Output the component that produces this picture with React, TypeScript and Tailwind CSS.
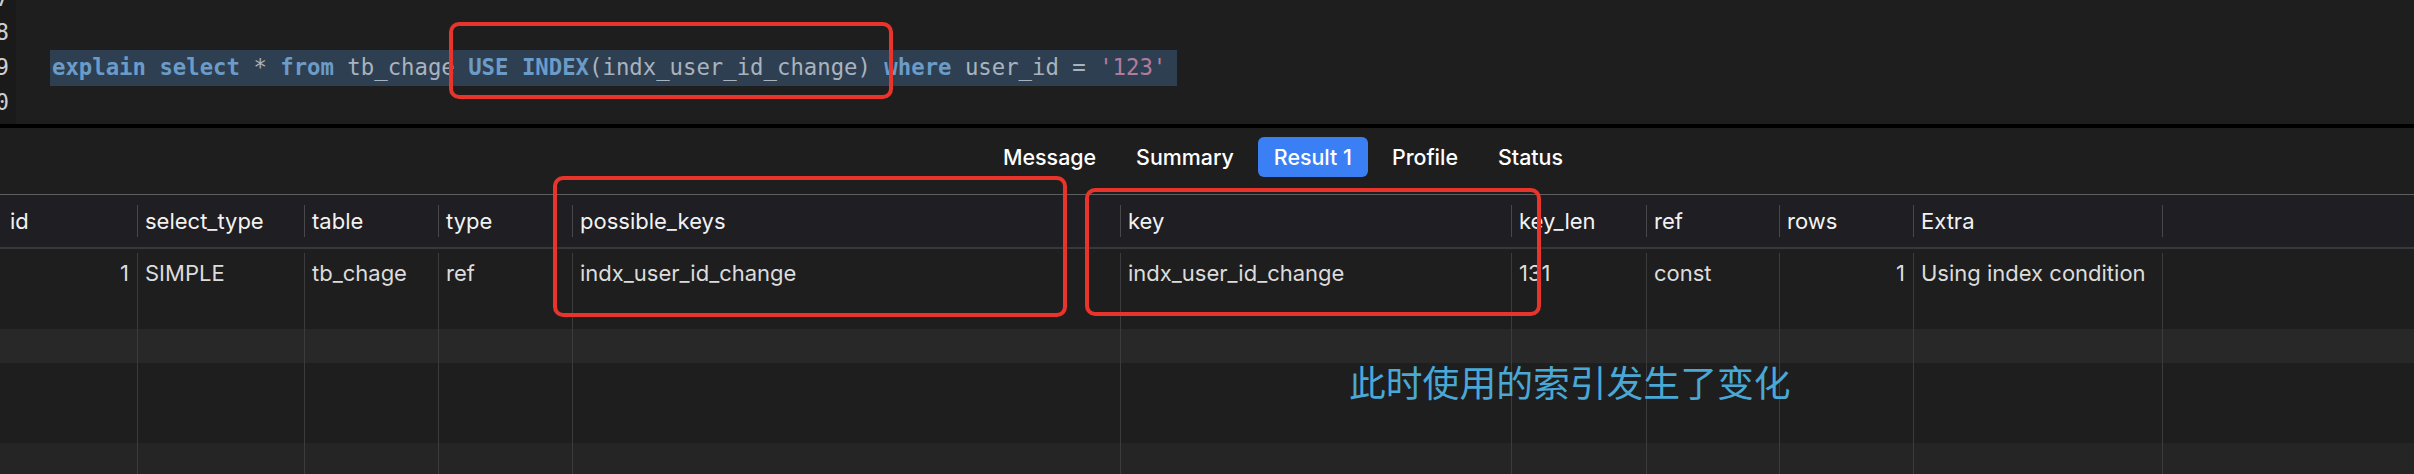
import React from 'react';

type Token = { text: string; kind?: 'kw' | 'str' };

const codeLine: Token[] = [
  { text: 'explain', kind: 'kw' },
  { text: ' ' },
  { text: 'select', kind: 'kw' },
  { text: ' * ' },
  { text: 'from', kind: 'kw' },
  { text: ' tb_chage ' },
  { text: 'USE', kind: 'kw' },
  { text: ' ' },
  { text: 'INDEX', kind: 'kw' },
  { text: '(indx_user_id_change) ' },
  { text: 'where', kind: 'kw' },
  { text: ' user_id = ' },
  { text: "'123'", kind: 'str' },
];

interface Column {
  name: string;
  value: string;
  right?: boolean;
}

const columns: Column[] = [
  { name: 'id', value: '1', right: true },
  { name: 'select_type', value: 'SIMPLE' },
  { name: 'table', value: 'tb_chage' },
  { name: 'type', value: 'ref' },
  { name: 'possible_keys', value: 'indx_user_id_change' },
  { name: 'key', value: 'indx_user_id_change' },
  { name: 'key_len', value: '131' },
  { name: 'ref', value: 'const' },
  { name: 'rows', value: '1', right: true },
  { name: 'Extra', value: 'Using index condition' },
  { name: '', value: '' },
];

const tabs = ['Message', 'Summary', 'Result 1', 'Profile', 'Status'];

const gridCols =
  'grid grid-cols-[137px_167px_134px_134px_548px_391px_135px_133px_134px_249px_1fr]';

const tokenClass = (kind?: 'kw' | 'str') => {
  if (kind === 'kw') return 'font-bold text-[#6b9cc8]';
  if (kind === 'str') return 'text-[#b07c9e]';
  return 'text-[#a9b3bd]';
};

const EmptyRow: React.FC<{ className: string }> = ({ className }) => (
  <div className={`${gridCols} ${className}`}>
    {columns.map((col, i) => (
      <div key={i} className={i === 0 ? '' : 'border-l border-[#3c3c3e]'} />
    ))}
  </div>
);

const App: React.FC = () => {
  return (
    <div className="relative w-[2414px] h-[474px] overflow-hidden bg-[#1e1e1e] font-['Inter',sans-serif]">
      {/* editor */}
      <div className="flex h-[124px] overflow-hidden font-['DejaVu_Sans_Mono',monospace] text-[22.3px]">
        <div className="w-[16px] shrink-0 bg-[#1a1a1a] -mt-[18px] text-[#cfcfcf]">
          <div className="h-[34px] flex items-center justify-end pr-[7px]">7</div>
          <div className="h-[34px] flex items-center justify-end pr-[7px]">8</div>
          <div className="h-[36px] flex items-center justify-end pr-[7px]">9</div>
          <div className="h-[34px] flex items-center justify-end pr-[7px]">0</div>
        </div>
        <div className="ml-[34px] -mt-[18px]">
          <div className="h-[34px]" />
          <div className="h-[34px]" />
          <div className="h-[36px] flex items-center bg-[#2f3f52] pl-[2px] pr-[11px] whitespace-pre">
            {codeLine.map((tok, i) => (
              <span key={i} className={tokenClass(tok.kind)}>
                {tok.text}
              </span>
            ))}
          </div>
          <div className="h-[34px]" />
        </div>
      </div>
      <div className="h-[4px] bg-black" />

      {/* tab bar */}
      <div className="h-[66px] pt-[9px] pl-[987px] flex items-start gap-[8px] text-[21.4px] font-medium text-white">
        {tabs.map((tab) => (
          <div
            key={tab}
            className={`h-[40px] px-[16px] flex items-center rounded-[6px] ${
              tab === 'Result 1' ? 'bg-[#3a80f4]' : ''
            }`}
          >
            {tab}
          </div>
        ))}
      </div>

      {/* table header */}
      <div className={`${gridCols} h-[55px] border-t border-b-2 border-t-[#5e5e60] border-b-[#38383b] bg-[#1f1e22] text-[22px] text-[#f2f2f2]`}>
        {columns.map((col, i) => (
          <div key={i} className="flex items-center">
            {i === 0 ? (
              <span className="pl-[10px]">{col.name}</span>
            ) : (
              <>
                <div className="w-px h-[32px] bg-[#48484a]" />
                <span className="pl-[7px]">{col.name}</span>
              </>
            )}
          </div>
        ))}
      </div>

      {/* table body */}
      <div className="pt-[4px] text-[22px] text-[#dcdcdc]">
        <div className={`${gridCols} h-[76px]`}>
          {columns.map((col, i) => (
            <div
              key={i}
              className={`pt-[6px] leading-[28px] ${i === 0 ? '' : 'border-l border-[#3c3c3e]'} ${
                col.right ? 'text-right pr-[8px]' : 'pl-[7px]'
              }`}
            >
              {col.value}
            </div>
          ))}
        </div>
        <EmptyRow className="h-[34px] bg-[#282828]" />
        <EmptyRow className="h-[80px]" />
        <EmptyRow className="h-[40px] bg-[#252525]" />
      </div>

      {/* annotations */}
      <div className="absolute left-[449px] top-[22px] w-[444px] h-[77px] border-[4px] border-[#e8342a] rounded-[10px]" />
      <div className="absolute left-[553px] top-[176px] w-[514px] h-[141px] border-[4px] border-[#e8342a] rounded-[10px]" />
      <div className="absolute left-[1085px] top-[188px] w-[456px] h-[128px] border-[4px] border-[#e8342a] rounded-[10px]" />
      <div className="absolute left-[1349px] top-[363px] text-[36.8px] leading-none text-[#4aa8d6] font-['Noto_Sans_CJK_SC',sans-serif]">
        此时使用的索引发生了变化
      </div>
    </div>
  );
};

export default App;
